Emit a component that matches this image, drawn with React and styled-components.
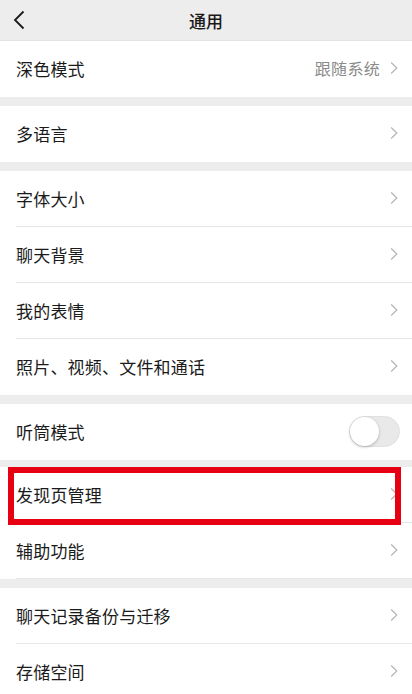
import React from "react";
import styled, { createGlobalStyle } from "styled-components";

const Global = createGlobalStyle`
  html, body { margin: 0; padding: 0; background: #ededed; }
  body { font-family: "Noto Sans CJK SC", "Noto Sans", sans-serif; }
  * { box-sizing: border-box; }
`;

const Page = styled.div`
  width: 412px;
  height: 694px;
  overflow: hidden;
  background: #ededed;
  display: flex;
  flex-direction: column;
  position: relative;
`;

const Header = styled.div`
  height: 41px;
  flex: none;
  display: grid;
  grid-template-columns: 60px 1fr 60px;
  align-items: center;
  background: #ededed;
  border-bottom: 1px solid #e2e2e2;
`;

const Back = styled.div`
  padding-left: 13px;
  display: flex;
  align-items: center;
`;

const Title = styled.div`
  text-align: center;
  font-size: 17px;
  font-weight: 500;
  color: #191919;
`;

const Group = styled.div`
  background: #fff;
  margin-top: ${(p) => p.$gap}px;
  flex: none;
  position: relative;
`;

const Row = styled.div`
  height: 56px;
  display: flex;
  align-items: center;
  padding: 0 14px 2px 16px;
  position: relative;
  &:not(:last-child)::after {
    content: "";
    position: absolute;
    left: 16px;
    right: 0;
    bottom: 0;
    height: 1px;
    background: #e7e7e7;
  }
`;

const Label = styled.div`
  flex: 1;
  font-size: 17px;
  color: #1a1a1a;
  letter-spacing: 0.2px;
`;

const Value = styled.div`
  font-size: 16px;
  color: #8a8a8a;
  margin-right: 10px;
  letter-spacing: 0.3px;
`;

const Switch = styled.div`
  width: 51px;
  height: 31px;
  border-radius: 16px;
  background: #e9e9e9;
  border: 1px solid #e0e0e0;
  position: relative;
  margin-right: -2px;
  &::before {
    content: "";
    position: absolute;
    left: 0;
    top: 0;
    width: 29px;
    height: 29px;
    border-radius: 50%;
    background: #fff;
    box-shadow: 0 1px 3px rgba(0, 0, 0, 0.25);
  }
`;

const Highlight = styled.div`
  position: absolute;
  left: 8px;
  top: 0px;
  width: 393px;
  height: 58px;
  border: 6px solid #e60012;
  pointer-events: none;
`;

const Chevron = () => (
  <svg width="8" height="14" viewBox="0 0 8 14">
    <path d="M1.2 1.5 L6.8 7 L1.2 12.5" fill="none" stroke="#b5b5b5" strokeWidth="1.2" />
  </svg>
);

const BackIcon = () => (
  <svg width="12" height="20" viewBox="0 0 12 20">
    <path d="M10.5 1.5 L2 10 L10.5 18.5" fill="none" stroke="#1a1a1a" strokeWidth="1.8" />
  </svg>
);

const Item = ({ label, value, toggle }) => (
  <Row>
    <Label>{label}</Label>
    {value && <Value>{value}</Value>}
    {toggle ? <Switch /> : <Chevron />}
  </Row>
);

export default function App() {
  return (
    <>
      <Global />
      <Page>
        <Header>
          <Back>
            <BackIcon />
          </Back>
          <Title>通用</Title>
          <div />
        </Header>
        <Group $gap={0}>
          <Item label="深色模式" value="跟随系统" />
        </Group>
        <Group $gap={9}>
          <Item label="多语言" />
        </Group>
        <Group $gap={9}>
          <Item label="字体大小" />
          <Item label="聊天背景" />
          <Item label="我的表情" />
          <Item label="照片、视频、文件和通话" />
        </Group>
        <Group $gap={9}>
          <Item label="听筒模式" toggle />
        </Group>
        <Group $gap={7}>
          <Item label="发现页管理" />
          <Item label="辅助功能" />
          <Highlight />
        </Group>
        <Group $gap={9}>
          <Item label="聊天记录备份与迁移" />
          <Item label="存储空间" />
        </Group>
      </Page>
    </>
  );
}
